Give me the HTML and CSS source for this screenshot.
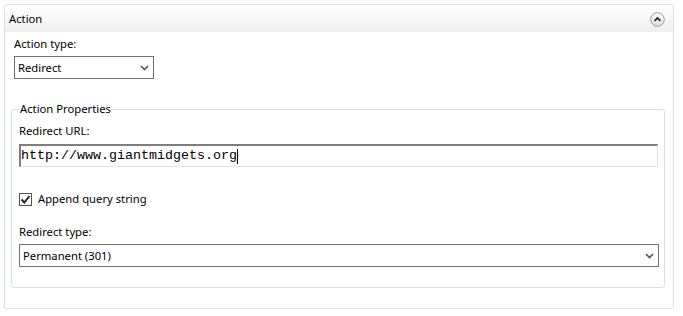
FILE: index.html
```html
<!DOCTYPE html>
<html>
<head>
<meta charset="utf-8">
<link rel="stylesheet" href="styles.css">
</head>
<body>
<div class="panel">
  <div class="header">
    <span class="title">Action</span>
    <span class="collapse">
      <svg width="15" height="15" viewBox="0 0 15 15">
        <defs>
          <linearGradient id="g" x1="0" y1="0" x2="0" y2="1">
            <stop offset="0" stop-color="#ffffff"/>
            <stop offset="1" stop-color="#dcdcdc"/>
          </linearGradient>
        </defs>
        <circle cx="7.5" cy="7.5" r="6.8" fill="url(#g)" stroke="#9a9a9a" stroke-width="1"/>
        <path d="M4.6 8.8 L7.5 5.9 L10.4 8.8" fill="none" stroke="#222" stroke-width="1.8"/>
      </svg>
    </span>
  </div>
  <div class="body">
    <div class="label">Action type:</div>
    <div class="select small">
      <span>Redirect</span>
      <svg class="chev" width="9" height="6" viewBox="0 0 9 6"><path d="M1 1 L4.5 4.5 L8 1" fill="none" stroke="#555" stroke-width="1.6"/></svg>
    </div>
    <fieldset class="group">
      <legend>Action Properties</legend>
      <div class="label">Redirect URL:</div>
      <div class="textbox"><span class="mono">http://www.giantmidgets.org</span><span class="caret"></span></div>
      <div class="check-row">
        <span class="checkbox">
          <svg width="11" height="11" viewBox="0 0 11 11"><path d="M1.5 5.5 L4.3 8.5 L9.5 2" fill="none" stroke="#222" stroke-width="2"/></svg>
        </span>
        <span>Append query string</span>
      </div>
      <div class="label tight">Redirect type:</div>
      <div class="select wide">
        <span>Permanent (301)</span>
        <svg class="chev" width="9" height="6" viewBox="0 0 9 6"><path d="M1 1 L4.5 4.5 L8 1" fill="none" stroke="#555" stroke-width="1.6"/></svg>
      </div>
    </fieldset>
  </div>
</div>
</body>
</html>
```

FILE: styles.css
```css
html, body {
  margin: 0;
  padding: 0;
  background: #ffffff;
}
body {
  font-family: "Noto Sans", "Open Sans", sans-serif;
  font-size: 11.25px;
  color: #000;
  padding: 4px;
}
.panel {
  width: 670px;
  height: 305px;
  box-sizing: border-box;
  border: 1px solid #d9e1e7;
  border-radius: 3px;
  display: flex;
  flex-direction: column;
}
.header {
  height: 27px;
  flex: none;
  display: flex;
  align-items: center;
  justify-content: space-between;
  padding: 1px 8px 0 4px;
  box-sizing: border-box;
  background: linear-gradient(#ffffff, #efefef);
  border-radius: 3px 3px 0 0;
}
.title {
  line-height: 16px;
}
.collapse {
  display: flex;
}
.body {
  padding: 4px 8px 0 9px;
  display: flex;
  flex-direction: column;
}
.label {
  line-height: 16px;
  margin-bottom: 4px;
}
.label.tight {
  margin-bottom: 4px;
}
.select {
  box-sizing: border-box;
  height: 23px;
  border: 1px solid #707070;
  background: #fff;
  display: flex;
  align-items: center;
  justify-content: space-between;
  padding: 0 4px 0 3px;
}
.select.small {
  width: 140px;
}
.select.wide {
  width: 640px;
}
.group {
  margin: 22px 0 0 -3px;
  padding: 6px 6px 20px 7px;
  border: 1px solid #d9e1e7;
  border-radius: 3px;
  min-width: 0;
}
.group legend {
  padding: 0 1px;
  margin-left: 0;
  line-height: 16px;
}
.group .label {
  margin-bottom: 5px;
}
.group .label.tight {
  margin-bottom: 4px;
}
.textbox {
  box-sizing: border-box;
  width: 639px;
  height: 23px;
  border: 1px solid #e2e2e2;
  border-top: 2px solid #7e7e7e;
  border-left: 2px solid #7e7e7e;
  display: flex;
  align-items: center;
  padding-left: 0;
}
.mono {
  font-family: "Liberation Mono", monospace;
  font-size: 13.33px;
  line-height: 16px;
}
.caret {
  width: 1px;
  height: 15px;
  background: #000;
}
.check-row {
  display: flex;
  align-items: center;
  gap: 6px;
  margin: 24px 0 17px 0;
  line-height: 16px;
}
.checkbox {
  box-sizing: border-box;
  width: 13px;
  height: 13px;
  border: 1px solid #555;
  display: flex;
  align-items: center;
  justify-content: center;
  background: #fff;
}
.chev {
  display: block;
}
```
